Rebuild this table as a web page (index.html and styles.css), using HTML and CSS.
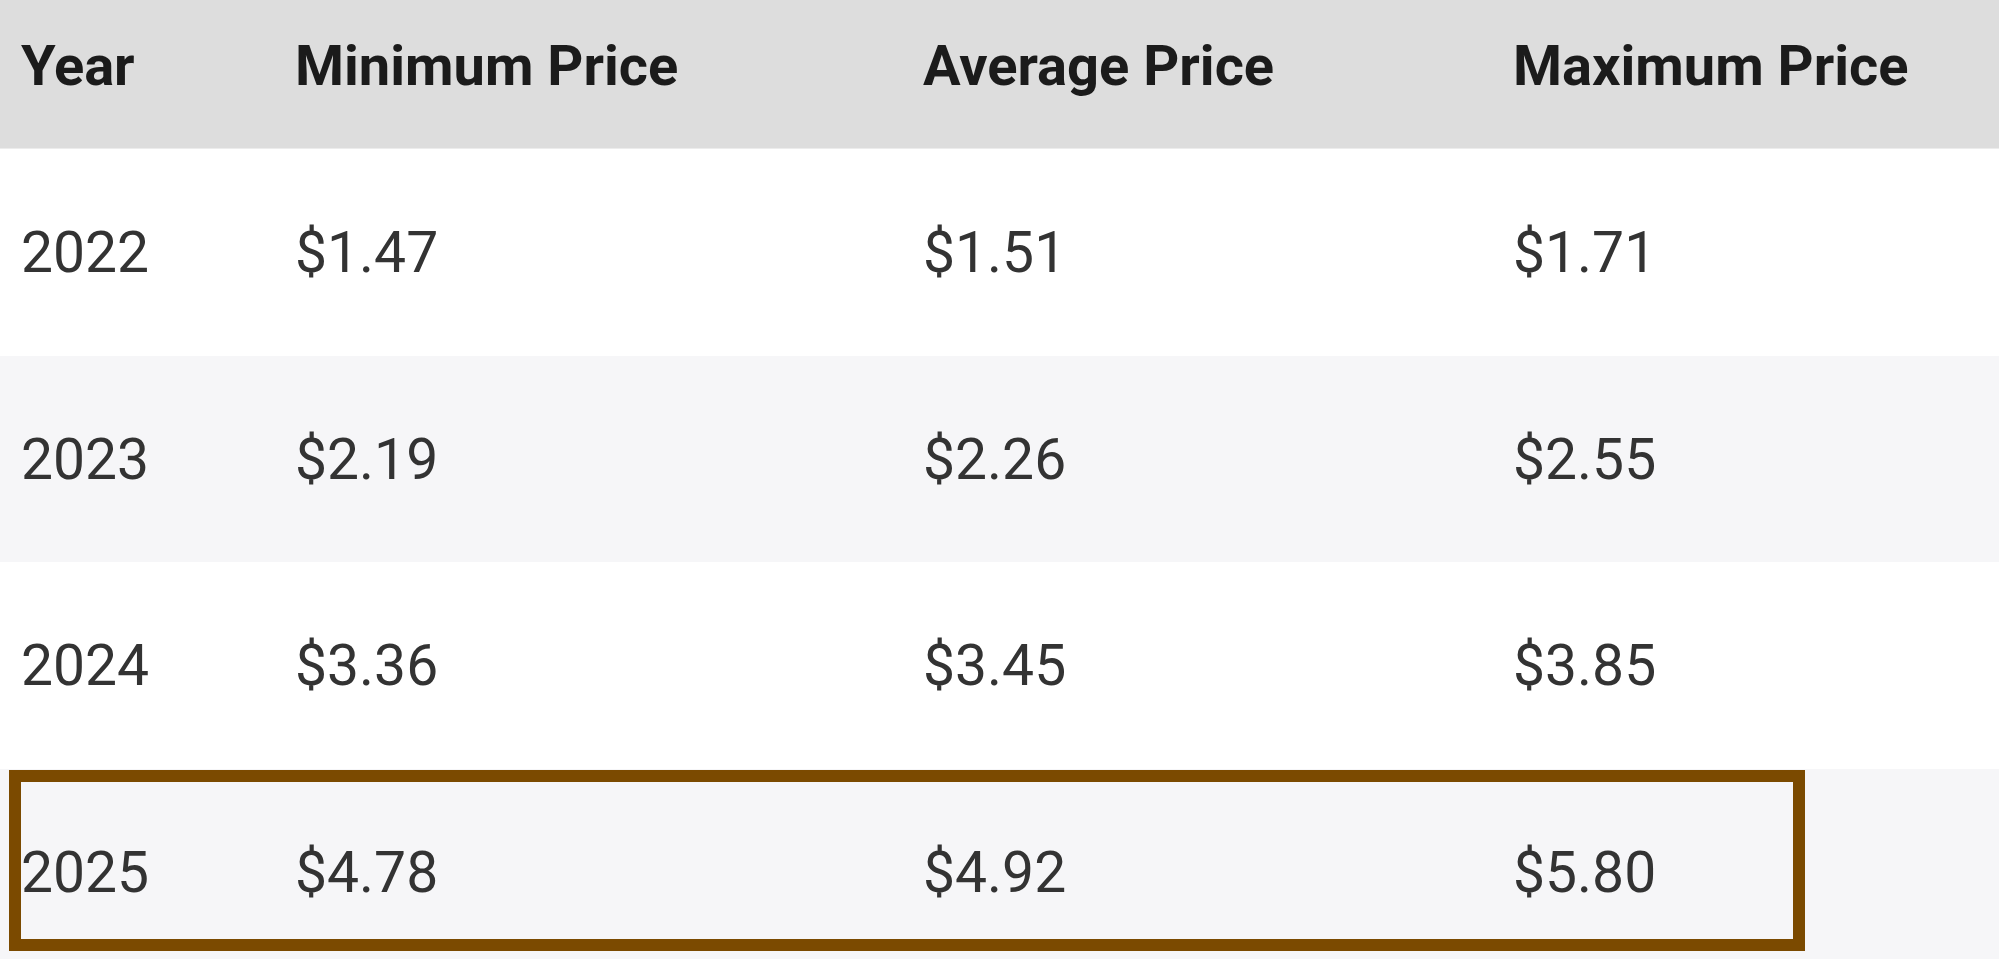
FILE: index.html
```html
<!DOCTYPE html>
<html lang="en">
<head>
<meta charset="utf-8">
<title>Price Prediction</title>
<link rel="stylesheet" href="styles.css">
</head>
<body>
<div class="price-table">
  <div class="row head">
    <div class="cell">Year</div>
    <div class="cell">Minimum Price</div>
    <div class="cell">Average Price</div>
    <div class="cell">Maximum Price</div>
  </div>
  <div class="row">
    <div class="cell">2022</div>
    <div class="cell">$1.47</div>
    <div class="cell">$1.51</div>
    <div class="cell">$1.71</div>
  </div>
  <div class="row alt">
    <div class="cell">2023</div>
    <div class="cell">$2.19</div>
    <div class="cell">$2.26</div>
    <div class="cell">$2.55</div>
  </div>
  <div class="row">
    <div class="cell">2024</div>
    <div class="cell">$3.36</div>
    <div class="cell">$3.45</div>
    <div class="cell">$3.85</div>
  </div>
  <div class="row alt marked">
    <div class="cell">2025</div>
    <div class="cell">$4.78</div>
    <div class="cell">$4.92</div>
    <div class="cell">$5.80</div>
    <div class="highlight"></div>
  </div>
</div>
</body>
</html>
```
FILE: styles.css
```css
html, body {
  margin: 0;
  padding: 0;
  background: #ffffff;
}
body {
  width: 1999px;
  height: 959px;
  overflow: hidden;
  font-family: Roboto, "Liberation Sans", Arial, sans-serif;
}
.price-table {
  display: flex;
  flex-direction: column;
}
.row {
  display: grid;
  grid-template-columns: 274px 628px 590px 1fr;
  align-items: center;
  height: 206.7px;
  background: #ffffff;
  color: #333333;
  font-size: 57px;
  font-weight: 400;
}
.row.alt {
  background: #f6f6f8;
}
.row.head {
  height: 148px;
  align-items: start;
  background: #dddddd;
  color: #1b1b1b;
  font-size: 56px;
  font-weight: 700;
  border-bottom: 1px solid #ececec;
}
.row.head .cell {
  padding-top: 38px;
  line-height: 56px;
}
.cell {
  padding-left: 21px;
  white-space: nowrap;
}
.row.marked {
  position: relative;
}
.highlight {
  position: absolute;
  top: 1px;
  left: 9px;
  width: 1772px;
  height: 157px;
  border: 12px solid #7b4a00;
}
```
